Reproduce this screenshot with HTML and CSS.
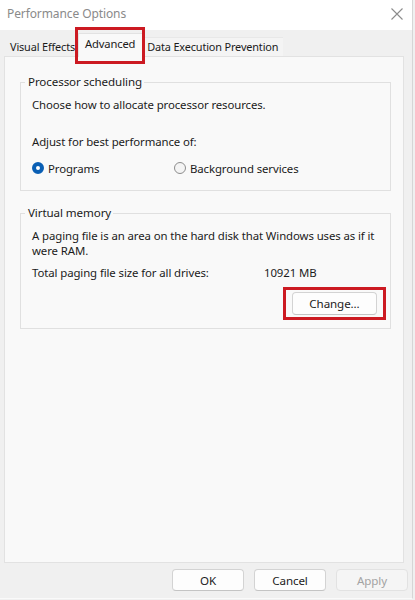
FILE: index.html
```html
<!DOCTYPE html>
<html>
<head>
<meta charset="utf-8">
<link rel="stylesheet" href="styles.css">
</head>
<body>
<div class="window">
  <div class="titlebar">
    <span class="title">Performance Options</span>
    <svg class="close" width="12" height="12" viewBox="0 0 12 12"><path d="M0.5 0.5 L11.5 11.5 M11.5 0.5 L0.5 11.5" stroke="#8c8c8c" stroke-width="1.1" fill="none"/></svg>
  </div>
  <div class="client">
    <div class="tabs">
      <div class="tab t1">Visual Effects</div>
      <div class="tab selected"><span class="mark tabmark"></span>Advanced</div>
      <div class="tab t3">Data Execution Prevention</div>
    </div>
    <div class="panel">
      <fieldset class="group g1">
        <legend>Processor scheduling</legend>
        <p class="line l1">Choose how to allocate processor resources.</p>
        <p class="line l2">Adjust for best performance of:</p>
        <div class="radios">
          <label class="radio r1"><span class="dot on"></span>Programs</label>
          <label class="radio r2"><span class="dot"></span>Background services</label>
        </div>
      </fieldset>
      <fieldset class="group g2">
        <legend>Virtual memory</legend>
        <p class="line v1">A paging file is an area on the hard disk that Windows uses as if it were RAM.</p>
        <div class="total"><span class="tlabel">Total paging file size for all drives:</span><span>10921 MB</span></div>
        <div class="changerow"><button class="btn change"><span class="mark changemark"></span>Change...</button></div>
      </fieldset>
    </div>
    <div class="footer">
      <button class="btn fbtn">OK</button>
      <button class="btn fbtn">Cancel</button>
      <button class="btn fbtn disabled">Apply</button>
    </div>
  </div>
</div>
</body>
</html>
```
FILE: styles.css
```css
html, body { margin: 0; padding: 0; }
body {
  width: 415px; height: 600px; overflow: hidden;
  font-family: "Noto Sans", "Open Sans", sans-serif;
  font-size: 11.4px; letter-spacing: -0.1px; color: #1b1b1b;
  background: #f0f0f0;
}
.window {
  width: 413px; height: 599px;
  border-right: 1px solid #d6d6d6;
  border-bottom: 1px solid #fafafa;
  box-sizing: border-box;
  display: flex; flex-direction: column;
}
.titlebar {
  height: 30px; background: #ffffff;
  display: flex; align-items: center; justify-content: space-between;
  padding: 0 9px 4px 7px; box-sizing: border-box;
}
.title { color: #8a8a8a; font-size: 12px; }
.close { margin-top: 2px; }
.client { flex: 1; display: flex; flex-direction: column; background: #f0f0f0; }
.tabs {
  height: 26px; display: flex; align-items: flex-end;
  padding-left: 4px;
  font-size: 10.9px; letter-spacing: -0.15px;
}
.tab {
  height: 18px; line-height: 17px;
  position: relative;
  white-space: nowrap;
}
.t1 { padding: 0 2px 0 6px; }
.t3 { background: #f4f4f4; border-top: 1px solid #e8e8e8; padding: 0 5px 0 3px; }
.tab.selected {
  height: 23px; line-height: 20px; background: #f9f9f9;
  border: 1px solid #e2e2e2; border-bottom: none;
  padding: 0 7px 0 6px; margin: 0 1px 0 1px; z-index: 1;
  margin-bottom: -1px; font-size: 11.2px;
}
.mark {
  position: absolute; border: 3px solid #cc1a22; box-sizing: border-box; pointer-events: none;
}
.tabmark { left: -4px; right: -3px; top: -7px; bottom: -7px; }
.panel {
  margin: 0 8px 0 4px;
  height: 507px; box-sizing: border-box;
  background: #f9f9f9; border: 1px solid #e2e2e2;
  display: flex; flex-direction: column;
  padding: 17px 12px 0 15px;
}
.group {
  margin: 0; border: 1px solid #e0e0e0; border-radius: 0;
  padding: 0 0 0 11px;
}
.group legend { padding: 0 2px 0 3px; margin-left: -7px; line-height: 16px; font-size: 11.6px; }
.line { margin: 0; }
.l1 { margin-top: 7px; line-height: 16px; }
.l2 { margin-top: 21px; line-height: 16px; }
.radios { display: flex; margin-top: 10px; height: 16px; align-items: center; padding-bottom: 14px; }
.radio { display: flex; align-items: center; }
.r1 { width: 142px; }
.dot {
  width: 12px; height: 12px; border-radius: 50%; box-sizing: border-box;
  border: 1px solid #8d8d8d; background: #f4f4f4; margin-right: 4px;
}
.dot.on { border: 4px solid #0a5fb4; background: #ffffff; }
.g2 { margin-top: 14px; height: 124px; box-sizing: border-box; }
.v1 { margin-top: 7px; line-height: 15px; width: 356px; }
.total { display: flex; margin-top: 7px; line-height: 16px; }
.tlabel { width: 232px; }
.changerow { display: flex; justify-content: flex-end; margin-top: 11px; padding-right: 13px; }
.btn {
  font-family: inherit; font-size: 11.6px; color: #1b1b1b; letter-spacing: -0.1px;
  background: #fdfdfd; border: 1px solid #d3d3d3; border-bottom-color: #c4c4c4;
  border-radius: 4px; padding: 0; position: relative;
}
.change { width: 85px; height: 23px; }
.changemark { left: -10px; right: -10px; top: -6px; bottom: -6px; }
.footer { display: flex; justify-content: flex-end; gap: 10px; padding: 6px 0 0 0; margin-right: 4px; }
.fbtn { width: 72px; height: 22px; }
.disabled { background: #f5f5f5; color: #a3a3a3; border-color: #e2e2e2; }
```
